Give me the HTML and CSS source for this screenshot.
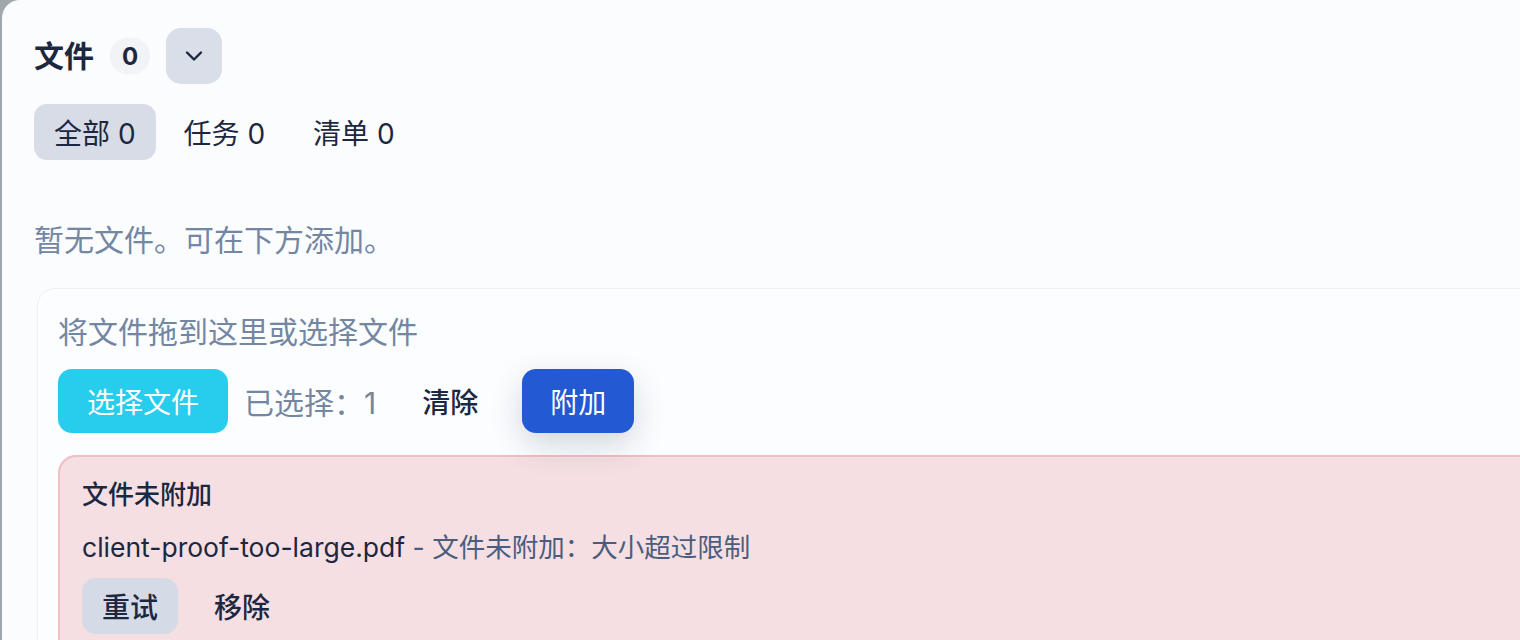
FILE: index.html
```html
<!DOCTYPE html>
<html lang="zh-CN">
<head>
<meta charset="utf-8">
<title>文件</title>
<link rel="stylesheet" href="styles.css">
</head>
<body>
<section class="panel">
  <header class="head">
    <h2 class="title">文件</h2>
    <span class="count">0</span>
    <button class="toggle" aria-label="折叠">
      <svg width="24" height="24" viewBox="0 0 24 24" fill="none"><path d="M5 8.5l7 7 7-7" stroke="#1c2740" stroke-width="2.4" stroke-linecap="round" stroke-linejoin="round"/></svg>
    </button>
  </header>
  <nav class="tabs">
    <button class="tab active">全部 0</button>
    <button class="tab">任务 0</button>
    <button class="tab">清单 0</button>
  </nav>
  <p class="empty">暂无文件。可在下方添加。</p>
  <div class="drop">
    <p class="drop-hint">将文件拖到这里或选择文件</p>
    <div class="actions">
      <button class="btn btn-cyan">选择文件</button>
      <span class="selected">已选择：1</span>
      <button class="btn btn-ghost">清除</button>
      <button class="btn btn-blue">附加</button>
    </div>
    <div class="error">
      <div class="error-title">文件未附加</div>
      <div class="error-line"><span class="fname">client-proof-too-large.pdf</span> - 文件未附加：大小超过限制</div>
      <div class="error-actions">
        <button class="sbtn sbtn-grey">重试</button>
        <button class="sbtn">移除</button>
      </div>
    </div>
  </div>
</section>
</body>
</html>
```

FILE: styles.css
```css
html, body {
  margin: 0;
  padding: 0;
  overflow: hidden;
  height: 100%;
}
body {
  background: #9fa9ac;
  font-family: "Inter", "Noto Sans CJK SC", sans-serif;
  color: #1c2740;
}
.panel {
  margin-left: 2px;
  width: 1640px;
  height: 700px;
  background: #fbfcfe;
  border-top-left-radius: 18px;
  padding: 28px 32px 0 32px;
  box-sizing: border-box;
}
.head {
  display: flex;
  align-items: center;
  gap: 16px;
  height: 56px;
}
.title {
  margin: 0;
  font-size: 30px;
  font-weight: 700;
  line-height: 1;
}
.count {
  display: inline-flex;
  align-items: center;
  justify-content: center;
  width: 40px;
  height: 36px;
  border-radius: 18px;
  background: #f1f3f7;
  font-size: 24px;
  font-weight: 700;
}
.toggle {
  width: 56px;
  height: 56px;
  border: 0;
  border-radius: 15px;
  background: #d9dee8;
  display: flex;
  align-items: center;
  justify-content: center;
  padding: 0;
}
.tabs {
  display: flex;
  gap: 8px;
  margin-top: 20px;
}
.tab {
  font-family: inherit;
  font-size: 28px;
  color: #1c2740;
  height: 56px;
  padding: 0 20px;
  border: 0;
  border-radius: 13px;
  background: transparent;
}
.tab.active {
  background: #d7dce7;
}
.empty {
  margin: 57px 0 0 0;
  font-size: 30px;
  line-height: 46px;
  color: #7386a2;
}
.drop {
  margin: 25px 0 0 3px;
  background: #fcfdfe;
  border: 1px solid #eceff3;
  border-radius: 18px;
  padding: 20px 20px 40px 20px;
}
.drop-hint {
  margin: 0;
  font-size: 30px;
  line-height: 46px;
  color: #7386a2;
}
.actions {
  display: flex;
  align-items: center;
  gap: 16px;
  margin-top: 14px;
}
.btn {
  font-family: inherit;
  font-size: 28px;
  height: 64px;
  padding: 0 28px;
  border: 0;
  border-radius: 14px;
  background: transparent;
  color: #1c2740;
}
.btn-cyan {
  background: #27cdec;
  color: #ffffff;
  padding: 0 29px;
}
.btn-ghost {
  font-weight: 500;
  padding: 0 28px 0 30px;
}
.btn-blue {
  background: #2459d4;
  color: #ffffff;
  box-shadow: 0 12px 32px rgba(40, 60, 110, 0.2);
}
.selected {
  font-size: 30px;
  color: #7386a2;
}
.error {
  margin-top: 22px;
  background: #f5dfe2;
  border: 2px solid #efbfc1;
  border-radius: 18px;
  padding: 18px 22px 20px 22px;
}
.error-title {
  font-size: 26px;
  line-height: 40px;
  font-weight: 500;
}
.error-line {
  margin-top: 12px;
  font-size: 26.5px;
  line-height: 40px;
  color: #4b5d7e;
}
.fname {
  color: #1c2740;
}
.error-actions {
  display: flex;
  gap: 16px;
  margin-top: 11px;
}
.sbtn {
  font-family: inherit;
  font-size: 28px;
  font-weight: 500;
  height: 56px;
  padding: 0 20px;
  border: 0;
  border-radius: 14px;
  background: transparent;
  color: #1c2740;
}
.sbtn-grey {
  background: #d5dbe6;
}
```
